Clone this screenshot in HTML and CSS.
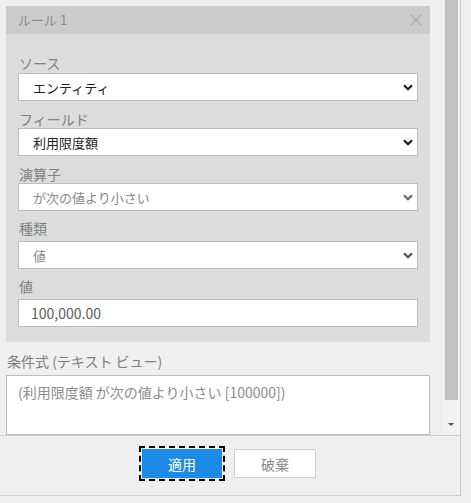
FILE: index.html
```html
<!DOCTYPE html>
<html lang="ja">
<head>
  <meta charset="UTF-8">
  <meta name="viewport" content="width=device-width, initial-scale=1.0">
  <title>ルール 1</title>
  <link rel="stylesheet" href="styles.css">
</head>
<body>
  <div class="dialog">
    <div class="scroll-area">
      <div class="content">
        <!-- ルールパネル -->
        <div class="rule">
          <div class="rule-head">
            <span>ルール 1</span>
            <svg class="close" width="12" height="12" viewBox="0 0 12 12">
              <path d="M0.5 0.5 L11.5 11.5 M11.5 0.5 L0.5 11.5" stroke="#a3abbb" stroke-width="1.2" fill="none"/>
            </svg>
          </div>
          <div class="rule-body">
            <label class="field-label">ソース</label>
            <div class="select-wrap">
              <select class="field"><option>エンティティ</option></select>
              <svg class="chevron" width="10" height="7" viewBox="0 0 10 7"><path d="M1 1.2 L5 5.2 L9 1.2" stroke="#1a1a1a" stroke-width="2.2" fill="none"/></svg>
            </div>

            <label class="field-label">フィールド</label>
            <div class="select-wrap">
              <select class="field"><option>利用限度額</option></select>
              <svg class="chevron" width="10" height="7" viewBox="0 0 10 7"><path d="M1 1.2 L5 5.2 L9 1.2" stroke="#1a1a1a" stroke-width="2.2" fill="none"/></svg>
            </div>

            <label class="field-label">演算子</label>
            <div class="select-wrap">
              <select class="field muted"><option>が次の値より小さい</option></select>
              <svg class="chevron" width="10" height="7" viewBox="0 0 10 7"><path d="M1 1.2 L5 5.2 L9 1.2" stroke="#6a6a6a" stroke-width="2.2" fill="none"/></svg>
            </div>

            <label class="field-label spaced">種類</label>
            <div class="select-wrap">
              <select class="field muted"><option>値</option></select>
              <svg class="chevron" width="10" height="7" viewBox="0 0 10 7"><path d="M1 1.2 L5 5.2 L9 1.2" stroke="#555" stroke-width="2.2" fill="none"/></svg>
            </div>

            <label class="field-label spaced">値</label>
            <input class="field value" type="text" value="100,000.00">
          </div>
        </div>

        <label class="expr-label">条件式 (テキスト ビュー)</label>
        <textarea class="expr" readonly>(利用限度額 が次の値より小さい [100000])</textarea>
      </div>

      <!-- スクロールバー -->
      <div class="scrollbar">
        <div class="thumb"></div>
        <div class="arrow"></div>
      </div>
    </div>

    <div class="footer">
      <button class="btn primary">適用</button>
      <button class="btn">破棄</button>
    </div>
  </div>
</body>
</html>
```

FILE: styles.css
```css
/* Generelle stiler */
* { box-sizing: border-box; }
body {
  margin: 0;
  padding: 0;
  font-family: "Noto Sans CJK JP", "Noto Sans", sans-serif;
  background-color: #efefef;
  color: #333;
}
.dialog {
  width: 461px;
  height: 496px;
  border-right: 1px solid #cdcdcd;
  border-bottom: 1px solid #cdcdcd;
  display: flex;
  flex-direction: column;
}
.scroll-area {
  height: 435px;
  display: flex;
  overflow: hidden;
}
.content {
  flex: 1;
  padding: 6px 13px 0 6px;
}
/* Regelpanel */
.rule-head {
  height: 28px;
  background-color: #cbcbcb;
  padding: 0 8px 0 12px;
  display: flex;
  align-items: center;
  justify-content: space-between;
  font-size: 13px;
  line-height: 18px;
  color: #8c8c8c;
}
.rule-body {
  background-color: #dcdcdc;
  padding: 20px 12px 15px 12px;
}
.field-label {
  display: block;
  margin-top: 9px;
  font-size: 14px;
  line-height: 18px;
  color: #808080;
  padding-left: 1px;
}
.field-label:first-child { margin-top: 0; margin-bottom: 1px; }
.field-label.spaced {
  margin-top: 8px;
  margin-bottom: 4px;
}
.select-wrap { position: relative; }
.field {
  display: block;
  width: 100%;
  height: 28px;
  margin: 0;
  padding: 0 24px 0 14px;
  border: 1px solid #bdbdbd;
  border-radius: 0;
  background-color: #fff;
  font-family: inherit;
  font-size: 13px;
  color: #1e1e1e;
  -webkit-appearance: none;
  appearance: none;
  outline: none;
}
.field.muted { color: #888; }
.field.value {
  padding-left: 12px;
  color: #5c5c5c;
  font-size: 14px;
}
.chevron {
  position: absolute;
  right: 5px;
  top: 11px;
  pointer-events: none;
}
/* Tekstvisning */
.expr-label {
  display: block;
  margin: 10px 0 5px 1px;
  font-size: 14px;
  line-height: 18px;
  color: #808080;
}
.expr {
  display: block;
  width: 100%;
  height: 60px;
  margin: 0;
  padding: 7px 11px;
  border: 1px solid #bdbdbd;
  background-color: #fff;
  font-family: inherit;
  font-size: 14px;
  line-height: 18px;
  color: #8c8c8c;
  resize: none;
  overflow: hidden;
  outline: none;
}
/* Rullefelt */
.scrollbar {
  width: 17px;
  background-color: #f1f1f1;
  display: flex;
  flex-direction: column;
}
.thumb {
  height: 400px;
  margin: 0 2px;
  background-color: #c1c1c1;
}
.arrow {
  flex: 1;
  position: relative;
}
.arrow::after {
  content: "";
  position: absolute;
  left: 5px;
  top: 23px;
  border-left: 3px solid transparent;
  border-right: 3px solid transparent;
  border-top: 3px solid #505050;
}
/* Knapper */
.footer {
  flex: 1;
  border-top: 1px solid #cdcdcd;
  display: flex;
  justify-content: center;
  align-items: flex-start;
  gap: 12px;
  padding: 13px 2px 0 0;
}
.btn {
  width: 82px;
  height: 29px;
  padding: 0;
  border: 1px solid #cfcfcf;
  background-color: #fff;
  font-family: inherit;
  font-size: 14px;
  color: #8a8a8a;
  cursor: pointer;
}
.btn.primary {
  width: 80px;
  background-color: #1c8be8;
  border-color: #1c8be8;
  color: #fff;
  outline: 2px dashed #000;
  outline-offset: 1px;
}
```
